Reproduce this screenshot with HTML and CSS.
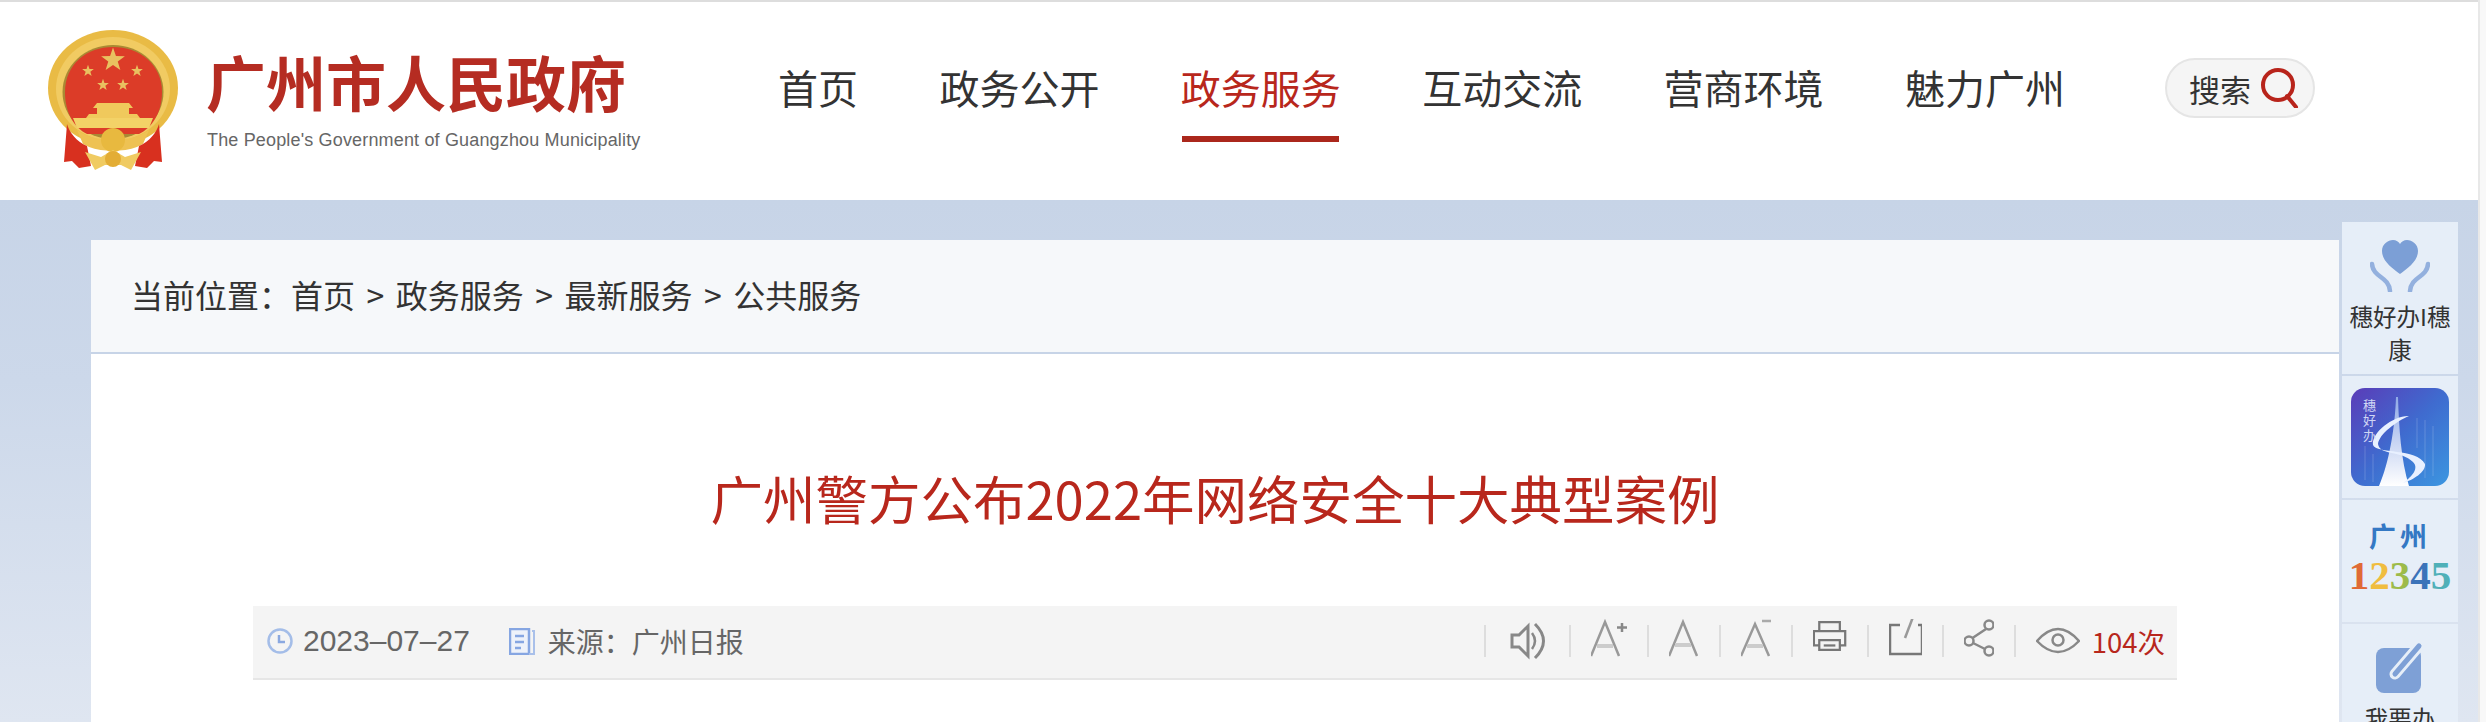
FILE: index.html
```html
<!DOCTYPE html>
<html lang="zh-CN">
<head>
  <meta charset="UTF-8" />
  <title>广州警方公布2022年网络安全十大典型案例</title>
  <link rel="stylesheet" href="styles.css">
</head>
<body>
  <div class="page">
    <div class="site">
      <header class="header">
        <svg class="emblem" viewBox="0 0 132 140">
          <defs>
            <polygon id="star" points="0,-10 2.35,-3.24 9.51,-3.09 3.8,1.24 5.88,8.09 0,4 -5.88,8.09 -3.8,1.24 -9.51,-3.09 -2.35,-3.24"/>
          </defs>
          <ellipse cx="66" cy="58" rx="65" ry="58" fill="#e9bb45"/>
          <ellipse cx="66" cy="59" rx="57" ry="52" fill="#f1cb62"/>
          <ellipse cx="66" cy="62" rx="50.500" ry="47" fill="#a98a34"/>
          <path d="M18 62 C18 34 40 17 66 17 C92 17 115 34 115 62 C115 84 104 98 92 104 H40 C28 98 18 84 18 62Z" fill="#dc3c28"/>
          <use href="#star" transform="translate(66 30) scale(1.250)" fill="#e9c160"/>
          <use href="#star" transform="translate(41 41) scale(.620)" fill="#e9c160"/>
          <use href="#star" transform="translate(90 41) scale(.620)" fill="#e9c160"/>
          <use href="#star" transform="translate(56 55) scale(.620)" fill="#e9c160"/>
          <use href="#star" transform="translate(76 55) scale(.620)" fill="#e9c160"/>
          <path d="M46 78 L50 73 H82 L86 78 H82 V84 H90 L93 88 H39 L42 84 H50 V78Z" fill="#f0c95c"/>
          <path d="M26 88 H106 L102 98 H30Z" fill="#f3d267"/>
          <path d="M30 100 Q48 112 66 108 Q84 112 102 100 L96 114 Q82 122 66 120 Q50 122 36 114Z" fill="#eec253"/>
          <path d="M20 94 C22 102 30 112 40 116 L44 136 L32 138 L25 131 L17 132Z" fill="#d8301f"/>
          <path d="M112 94 C110 102 102 112 92 116 L88 136 L100 138 L107 131 L115 132Z" fill="#d8301f"/>
          <circle cx="66" cy="110" r="12" fill="#e8b93f"/>
          <path d="M38 122 L54 127 L66 120 L78 127 L94 122 L84 140 L74 135 H58 L48 140Z" fill="#f0cb62"/>
          <circle cx="66" cy="129" r="8" fill="#e3ad35"/>
        </svg>
        <div class="brand">
          <div class="brand-cn">广州市人民政府</div>
          <div class="brand-en">The People's Government of Guangzhou Municipality</div>
        </div>
        <nav class="nav">
          <a class="nav-item">首页</a>
          <a class="nav-item">政务公开</a>
          <a class="nav-item active">政务服务</a>
          <a class="nav-item">互动交流</a>
          <a class="nav-item">营商环境</a>
          <a class="nav-item">魅力广州</a>
        </nav>
        <div class="search">
          <span>搜索</span>
          <svg width="40" height="40" viewBox="0 0 40 40" fill="none" stroke="#b8241b" stroke-width="4">
            <ellipse cx="18" cy="17" rx="15" ry="15"/>
            <path d="M27 28 L36 39" stroke-linecap="round"/>
          </svg>
        </div>
      </header>

      <div class="main">
        <div class="panel">
          <div class="crumbs">
            当前位置：<a>首页</a><span class="sep">&gt;</span><a>政务服务</a><span class="sep">&gt;</span><a>最新服务</a><span class="sep">&gt;</span><a>公共服务</a>
          </div>
          <h1 class="title">广州警方公布2022年网络安全十大典型案例</h1>
          <div class="meta">
            <svg class="meta-icon" width="26" height="26" viewBox="0 0 26 26" fill="none" stroke="#a4bde8" stroke-width="2.5">
              <circle cx="13" cy="13" r="11.5"/>
              <path d="M12 7 V14 H18" stroke="#8aa8e0"/>
            </svg>
            <span class="date">2023–07–27</span>
            <svg class="meta-icon source-icon" width="26" height="27" viewBox="0 0 26 27" fill="none" stroke="#86a6e2" stroke-width="2">
              <path d="M1 1 H20 V26 H1Z" fill="#eef2fa" stroke-width="2.5"/>
              <path d="M23 3 H25 V26 H20" stroke="#a9c0ea"/>
              <path d="M6 8 H15 M6 14 H15 M6 20 H12" stroke-width="2.5"/>
            </svg>
            <span class="source">来源：广州日报</span>
            <div class="tools">
              <i class="tool-sep"></i>
              <svg class="tool speaker" width="39" height="44" viewBox="0 0 39 44" fill="none" stroke="#888" stroke-width="2.5">
                <path d="M2 16 H9 L18 7 V37 L9 28 H2Z" stroke-width="3"/>
                <path d="M22 14 Q28 22 22 30"/>
                <path d="M25 5 Q42 22 25 39" stroke-width="3"/>
              </svg>
              <i class="tool-sep"></i>
              <svg class="tool" width="36" height="44" viewBox="0 0 36 44" fill="none" stroke="#999" stroke-width="2.5">
                <path d="M0 37 L14 3 L28 37"/>
                <path d="M6 27 H22" stroke="#ccc" stroke-width="4"/>
                <path d="M31 4 V13 M26 8.500 H36" stroke="#888"/>
              </svg>
              <i class="tool-sep"></i>
              <svg class="tool" width="30" height="44" viewBox="0 0 30 44" fill="none" stroke="#999" stroke-width="2.5">
                <path d="M0 37 L14 3 L28 37"/>
                <path d="M6 26 H22" stroke="#ccc" stroke-width="4"/>
              </svg>
              <i class="tool-sep"></i>
              <svg class="tool" width="30" height="44" viewBox="0 0 30 44" fill="none" stroke="#999" stroke-width="2.5">
                <path d="M0 37 L14 5 L28 37"/>
                <path d="M6 27 H22" stroke="#ccc" stroke-width="4"/>
                <path d="M21 2 H30" stroke="#aaa"/>
              </svg>
              <i class="tool-sep"></i>
              <svg class="tool" width="34" height="44" viewBox="0 0 38 44" fill="none" stroke="#777" stroke-width="2.500">
                <path d="M7 11 V1 H30 V11"/>
                <path d="M7 27 H1 V11 H36 V27 H30"/>
                <path d="M7 21 H30 V32 H7Z"/>
                <path d="M12 27 H25"/>
              </svg>
              <i class="tool-sep"></i>
              <svg class="tool" width="33" height="44" viewBox="0 0 33 44" fill="none" stroke="#777" stroke-width="2.500">
                <path d="M11 6 H1 V35 H33 V6 H29"/>
                <path d="M24 -2 L16 19" stroke="#999"/>
              </svg>
              <i class="tool-sep"></i>
              <svg class="tool" width="30" height="44" viewBox="0 0 30 44" fill="none" stroke="#888" stroke-width="2.500">
                <circle cx="25" cy="6" r="4.500"/>
                <circle cx="5" cy="22" r="4.500"/>
                <circle cx="25" cy="32" r="4.500"/>
                <path d="M22 10 L8.500 19 M9 24 L21 30"/>
              </svg>
              <i class="tool-sep"></i>
              <svg class="tool eye" width="44" height="44" viewBox="0 0 44 44" fill="none" stroke="#888" stroke-width="2.500">
                <path d="M1 22 Q22 -2 43 22 Q22 44 1 22Z"/>
                <circle cx="22" cy="21" r="5.500"/>
              </svg>
              <span class="views">104次</span>
            </div>
          </div>
        </div>

        <aside class="side">
          <div class="side-item item-care">
            <svg width="60" height="52" viewBox="0 0 60 52" fill="none">
              <path d="M30 34 C22 28 12 21 12 11 C12 4 18 0 23 0 C26 0 29 2 30 4 C31 2 34 0 37 0 C42 0 48 4 48 11 C48 21 38 28 30 34Z" fill="#7c9fd6"/>
              <path d="M2 24 C3 38 19 36 20 51 M58 24 C57 38 41 36 40 51" stroke="#93b0de" stroke-width="4.500" stroke-linecap="round"/>
            </svg>
            <p class="side-text">穗好办I穗康</p>
          </div>
          <div class="side-item item-app">
            <div class="app-icon">
              <span class="app-name">穗好办</span>
              <svg class="app-art" width="98" height="98" viewBox="0 0 98 98" fill="none">
                <defs>
                  <linearGradient id="tower" x1="0" y1="0" x2="0" y2="1">
                    <stop offset="0" stop-color="#8fa9e6"/>
                    <stop offset="1" stop-color="#fff"/>
                  </linearGradient>
                </defs>
                <path d="M74 32 V90 M82 38 V88 M66 30 V60 M14 58 V92 M22 66 V94" stroke="#fff" stroke-opacity=".12" stroke-width="1.500"/>
                <path d="M45 9 H47 C48 40 50 72 58 98 H28 C38 75 44 40 45 9Z" fill="url(#tower)"/>
                <path d="M58 28 C44 27 20 44 22 57 C25 66 66 60 74 76 C75 84 62 92 52 95 C62 88 68 80 62 74 C50 62 29 68 27 56 C28 46 46 33 58 28Z" fill="#e8f0ff"/>
              </svg>
            </div>
          </div>
          <div class="side-item item-hotline">
            <div class="hotline-city">广州</div>
            <div class="hotline-num"><span class="n1">1</span><span class="n2">2</span><span class="n3">3</span><span class="n4">4</span><span class="n5">5</span></div>
          </div>
          <div class="side-item item-todo">
            <svg width="50" height="52" viewBox="0 0 50 52" fill="none">
              <rect x="1" y="6" width="45" height="45" rx="8" fill="#7ea0d6"/>
              <path d="M20 32 L44 4" stroke="#e6eef8" stroke-width="11" stroke-linecap="round"/>
              <path d="M20 32 L44 4" stroke="#7ea0d6" stroke-width="5" stroke-linecap="round"/>
            </svg>
            <p class="side-text">我要办</p>
          </div>
        </aside>
      </div>
    </div>
    <div class="scrollbar"></div>
  </div>
</body>
</html>
```

FILE: styles.css
```css
* { box-sizing: border-box; }

html, body {
  margin: 0;
  height: 722px;
  overflow: hidden;
}

body {
  font-family: "Noto Sans CJK SC", "Liberation Sans", sans-serif;
  color: #333;
  background: #fff;
}

.page {
  display: flex;
  height: 722px;
}

.site {
  flex: 1;
  min-width: 0;
  background: linear-gradient(180deg, #c7d4e7 200px, #ccd8ea 380px, #dfe6f1 722px);
}

.scrollbar {
  width: 8px;
  background: #f8f8f8;
  border-left: 2px solid #e8e8e8;
}

/* header */
.header {
  display: flex;
  align-items: flex-start;
  height: 200px;
  padding-left: 47px;
  background: #fff;
  border-top: 2px solid #ddd;
}

.emblem {
  width: 132px;
  height: 140px;
  margin-top: 28px;
  filter: blur(0.6px);
}

.brand {
  width: 434px;
  margin: 49px 0 0 27px;
}

.brand-cn {
  font-size: 60px;
  line-height: 60px;
  font-weight: 700;
  color: #b52c22;
  white-space: nowrap;
}

.brand-en {
  margin: 18px 0 0 1px;
  font-family: "Liberation Sans", sans-serif;
  font-size: 18px;
  line-height: 22px;
  letter-spacing: 0.16px;
  color: #666;
  white-space: nowrap;
}

.nav {
  display: flex;
  gap: 81.4px;
  margin: 55px 0 0 138px;
}

.nav-item {
  font-size: 40px;
  line-height: 60px;
  color: #333;
  white-space: nowrap;
}

.nav-item.active {
  color: #b8271c;
}

.nav-item.active::after {
  content: "";
  display: block;
  height: 6px;
  margin: 19px 1.5px 0;
  background: #ab271c;
}

.search {
  display: flex;
  align-items: center;
  gap: 9px;
  height: 60px;
  margin: 56px 0 0 100px;
  padding-left: 22px;
  width: 150px;
  font-size: 31px;
  background: #f5f5f5;
  border: 2px solid #e5e5e5;
  border-radius: 30px;
}

/* main area */
.main {
  display: flex;
  align-items: flex-start;
  gap: 3px;
  height: 522px;
  padding: 22px 20px 0 91px;
  overflow: hidden;
}

.panel {
  flex: 1;
  min-width: 0;
  height: 482px;
  margin-top: 18px;
  background: #fff;
}

.crumbs {
  height: 114px;
  padding-left: 40px;
  font-size: 32px;
  line-height: 108px;
  color: #333;
  background: #f6f8fa;
  border-bottom: 2px solid #c7d4e7;
  white-space: nowrap;
}

.sep {
  margin: 0 11.5px;
}

.title {
  margin: 113px 0 79px;
  font-size: 52.5px;
  line-height: 60px;
  font-weight: 400;
  color: #b8271c;
  text-align: center;
}

.meta {
  display: flex;
  align-items: center;
  height: 74px;
  margin: 0 162px;
  padding: 0 12px 2px 14px;
  font-size: 28px;
  color: #666;
  background: #f4f4f4;
  border-bottom: 2px solid #e6e6e6;
}

.date {
  margin-left: 10px;
  font-family: "Liberation Sans", sans-serif;
  font-size: 30px;
}

.source-icon {
  margin-left: 39px;
}

.source {
  margin-left: 13px;
}

.tools {
  display: flex;
  align-items: center;
  gap: 20px;
  margin-left: auto;
}

.tool-sep {
  width: 2px;
  height: 32px;
  background: #ddd;
}

.speaker {
  margin-left: 4px;
}

.eye {
  margin-right: -8px;
}

.views {
  font-size: 27.5px;
  color: #b8271c;
}

/* right hand links */
.side {
  display: flex;
  flex-direction: column;
  gap: 2px;
  width: 116px;
  flex: none;
}

.side-item {
  display: flex;
  flex-direction: column;
  align-items: center;
  background: #e6eef8;
}

.side-text {
  margin: 8px 0 0;
  padding: 0 6px;
  font-size: 23.5px;
  line-height: 33px;
  text-align: center;
  color: #333;
}

.item-care {
  height: 152px;
  padding-top: 18px;
}

.item-app {
  height: 122px;
  padding-top: 12px;
}

.app-icon {
  position: relative;
  width: 98px;
  height: 98px;
  border-radius: 14px;
  overflow: hidden;
  background: linear-gradient(135deg, #5a3cb8 0%, #3f6bcf 50%, #3c96e0 100%);
}

.app-art {
  display: block;
}

.app-name {
  position: absolute;
  left: 12px;
  top: 9px;
  width: 14px;
  font-size: 13px;
  line-height: 15px;
  color: #cfd6f4;
}

.item-hotline {
  height: 122px;
  padding-top: 20px;
}

.hotline-city {
  font-size: 27px;
  line-height: 32px;
  font-weight: 700;
  letter-spacing: 4px;
  color: #3478c4;
}

.hotline-num {
  margin-top: 6px;
  font-family: "Liberation Serif", serif;
  font-size: 41px;
  line-height: 34px;
  font-weight: 700;
}

.n1 { color: #e06a35; }
.n2 { color: #f0bd3f; }
.n3 { color: #9dbb4a; }
.n4 { color: #3b73b9; }
.n5 { color: #4fb0b8; }

.item-todo {
  height: 140px;
  padding-top: 18px;
}
```
